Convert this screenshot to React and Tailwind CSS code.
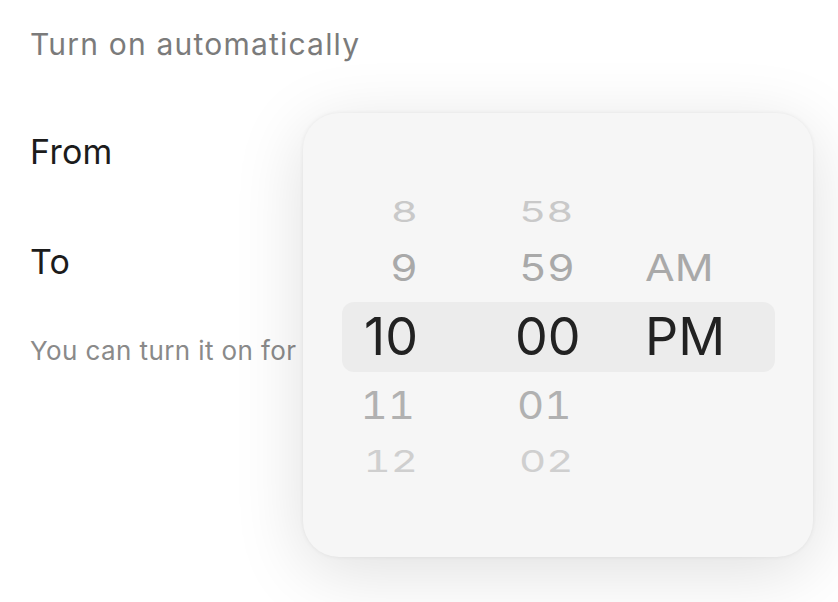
import React from "react";

const font = { fontFamily: "Inter, 'Noto Sans', sans-serif" };

function Row({ h, m, ap, cls, mShift = "", hShift = "", nums = "tabular-nums" }) {
  return (
    <div className={"flex items-center " + nums}>
      <div className={"w-[76px] flex justify-end items-center leading-none " + hShift + " " + cls}>{h}</div>
      <div className={"ml-[97px] w-[100px] flex justify-start items-center leading-none " + mShift + " " + cls}>{m}</div>
      <div className={"ml-[30px] w-[100px] flex justify-start items-center leading-none " + cls}>{ap}</div>
    </div>
  );
}

export default function App() {
  return (
    <div
      className="relative w-[838px] h-[602px] overflow-hidden bg-white"
      style={font}
    >
      <div className="flex flex-col pl-[30px] pt-[26px]">
        <div className="text-[30px] leading-[36px] text-[#7b7b7b] tracking-[1.2px]">
          Turn on automatically
        </div>
        <div className="mt-[70px] text-[34px] leading-[40px] text-[#1c1c1c] tracking-[0.3px]">From</div>
        <div className="mt-[70px] text-[34px] leading-[40px] text-[#1c1c1c] tracking-[0.3px]">To</div>
        <div className="mt-[53px] text-[26px] leading-[32px] text-[#8a8a8a] tracking-[0.4px]">
          You can turn it on for
        </div>
      </div>

      <div className="absolute left-[303px] top-[113px] w-[510px] h-[444px] rounded-[36px] bg-[#f6f6f6] shadow-[0_14px_70px_rgba(0,0,0,0.13),0_0_4px_rgba(0,0,0,0.07)]">
        <div className="flex flex-col pl-[39px] pr-[38px] pt-[71px]">
          <Row
            h="8"
            m="58"
            ap=""
            mShift="pl-[4px]"
            cls="h-[56px] text-[42px] text-[#c9c9c9] scale-y-[0.66]"
          />
          <Row
            h="9"
            m="59"
            ap="AM"
            mShift="pl-[4px]"
            cls="h-[56px] text-[43px] text-[#a9a9a9] scale-y-[0.84]"
          />
          <div className="mt-[6px] mb-[6px] h-[70px] rounded-[12px] bg-[#ececec]">
            <Row
              h="10"
              m="00"
              ap="PM"
              nums="normal-nums"
              hShift="pr-[0px]"
              cls="h-[70px] text-[52px] text-[#222222]"
            />
          </div>
          <Row
            h="11"
            m="01"
            ap=""
            mShift="pl-[2px]"
            hShift="pr-[3px]"
            cls="h-[56px] text-[42px] text-[#b1b1b1] scale-y-[0.9]"
          />
          <Row
            h="12"
            m="02"
            ap=""
            mShift="pl-[4px]"
            cls="h-[56px] text-[42px] text-[#cfcfcf] scale-y-[0.7]"
          />
        </div>
      </div>
    </div>
  );
}
